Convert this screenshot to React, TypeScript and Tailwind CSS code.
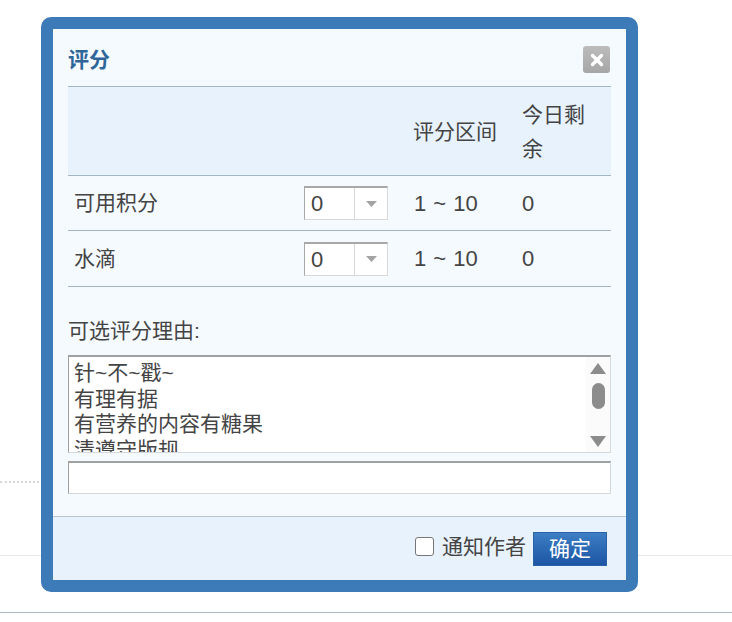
import { X } from 'lucide-react'

const ROWS = [
  { label: '可用积分', range: '1 ~ 10', left: '0', height: 'h-[55px]' },
  { label: '水滴', range: '1 ~ 10', left: '0', height: 'h-[56px]' },
]

const REASONS = ['针~不~戳~', '有理有据', '有营养的内容有糖果', '清遵守版规']

const FONT = "font-['Liberation_Sans','Noto_Sans_CJK_SC',sans-serif]"

function ScoreSelect() {
  return (
    <div className="flex h-[34px] w-[84px] border border-t-2 border-[#d5d9dc] border-t-[#a8a8a8] border-l-[#a8a8a8] bg-white">
      <div className="w-[49px] pl-[6px] text-[22px] leading-[31px]">0</div>
      <div className="flex flex-1 items-center justify-center border-l border-[#d5d9dc]">
        <svg width="11" height="6" viewBox="0 0 11 6">
          <path d="M0 0h11L5.5 6z" fill="#a3a3a3" />
        </svg>
      </div>
    </div>
  )
}

export default function App() {
  return (
    <div className={`relative h-[622px] w-[732px] overflow-hidden bg-white text-[21px] text-[#444] ${FONT}`}>
      {/* page behind the dialog */}
      <div className="mt-[481px] w-[39px] border-t-2 border-dotted border-[#d8d8d8]" />
      <div className="mt-[72px] border-t border-[#e8e8e8]" />
      <div className="mt-[56px] border-t border-[#a9bcc4]" />

      {/* dialog */}
      <div className="absolute top-[17px] left-[41px] flex h-[575px] w-[597px] flex-col rounded-[10px] border-[12px] border-[#3d7ab8] bg-[#f5faff]">
        <div className="flex h-[57px] items-start justify-between pt-[17px] pr-[16px] pl-[15px]">
          <h3 className="text-[21px] leading-[28px] font-bold text-[#2f6699]">评分</h3>
          <button className="flex h-[27px] w-[27px] items-center justify-center rounded-[3px] bg-gradient-to-b from-[#bcbcbc] to-[#a6a6a6]">
            <X size={18} strokeWidth={4.5} color="#fff" />
          </button>
        </div>

        <div className="mx-[15px] w-[543px]">
          <div className="grid h-[90px] grid-cols-[230px_110px_108px_95px] items-center border-y border-[#a3b4c4] bg-[#e8f2fc] pt-[1px] leading-[34px]">
            <div />
            <div />
            <div className="pt-[1px] pl-[5px]">评分区间</div>
            <div className="px-[6px]">今日剩余</div>
          </div>
          {ROWS.map(row => (
            <div
              key={row.label}
              className={`grid ${row.height} grid-cols-[230px_110px_108px_95px] items-center border-b border-[#a3b4c4]`}
            >
              <div className="pl-[6px]">{row.label}</div>
              <div className="pl-[6px]">
                <ScoreSelect />
              </div>
              <div className="pl-[6px] text-[22px] [word-spacing:1px]">{row.range}</div>
              <div className="pl-[6px] text-[22px]">{row.left}</div>
            </div>
          ))}

          <p className="mt-[29px] leading-[30px]">可选评分理由:</p>

          <div className="mt-[9px] flex h-[98px] overflow-hidden border border-t-2 border-[#d5d9dc] border-t-[#a0a0a0] border-l-[#a0a0a0] bg-white">
            <ul className="flex-1 pt-[3px] pl-[5px] leading-[25.5px]">
              {REASONS.map(reason => (
                <li key={reason}>{reason}</li>
              ))}
            </ul>
            <div className="flex w-[24px] flex-col items-center bg-[#fbfbfb] pt-[6px]">
              <svg width="16" height="11" viewBox="0 0 16 11">
                <path d="M8 0l8 11H0z" fill="#8c8c8c" />
              </svg>
              <div className="mt-[9px] h-[26px] w-[13px] rounded-full bg-[#8c8c8c]" />
              <svg className="mt-[27px]" width="16" height="11" viewBox="0 0 16 11">
                <path d="M0 0h16L8 11z" fill="#8c8c8c" />
              </svg>
            </div>
          </div>

          <div className="mt-[8px] h-[33px] border border-t-2 border-[#d5d9dc] border-t-[#a0a0a0] border-l-[#a0a0a0] bg-white" />
        </div>

        <div className="mt-auto flex h-[64px] items-center justify-end border-t border-[#b8c6d2] bg-[#e8f2fc] pr-[19px]">
          <input type="checkbox" className="mb-[4px] h-[19px] w-[19px] appearance-none rounded-[3px] border border-[#777] bg-white" />
          <span className="mr-[7px] mb-[3px] ml-[8px]">通知作者</span>
          <button className="h-[34px] w-[74px] border border-[#2a62a8] bg-gradient-to-b from-[#3d7ec4] to-[#1c55a4] text-[21px] leading-[32px] text-white">
            确定
          </button>
        </div>
      </div>
    </div>
  )
}
